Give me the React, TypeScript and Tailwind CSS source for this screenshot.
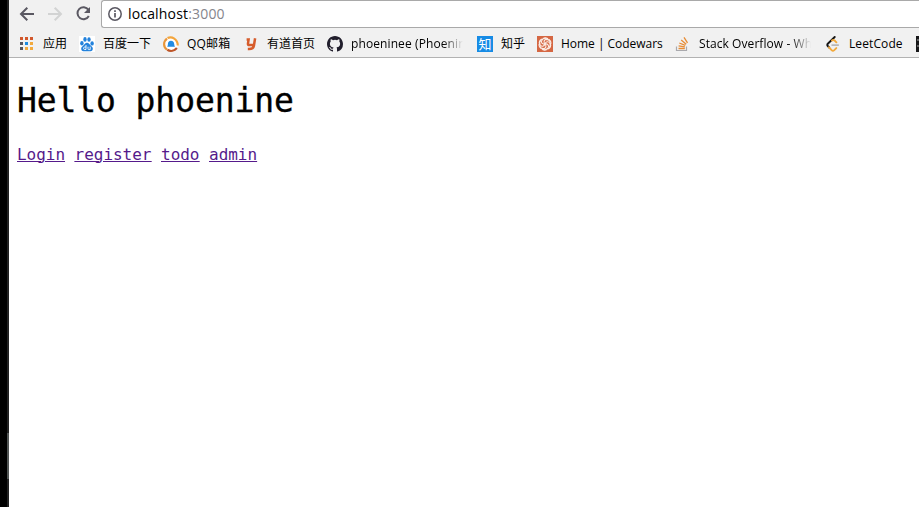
import type { ReactNode } from "react";

function AppsIcon() {
  const colors = ["#d2582c", "#d2582c", "#d2582c", "#55555f", "#1c8be0", "#f2a93c", "#55555f", "#f2a93c", "#f2a93c"];
  return (
    <svg viewBox="0 0 16 16" className="size-4" shapeRendering="crispEdges">
      {colors.map((c, i) => (
        <rect key={i} x={1 + (i % 3) * 5} y={1 + Math.floor(i / 3) * 5} width="3" height="3" fill={c} />
      ))}
    </svg>
  );
}

function BaiduIcon() {
  return (
    <svg viewBox="0 0 16 16" className="size-4 bg-white" fill="#2382dc">
      <ellipse cx="2.9" cy="7.2" rx="1.7" ry="2.2" />
      <ellipse cx="6" cy="3.4" rx="1.7" ry="2.3" />
      <ellipse cx="10" cy="3.5" rx="1.7" ry="2.3" />
      <ellipse cx="13.1" cy="7.4" rx="1.7" ry="2.2" />
      <path d="M8 6.7c1.8 0 2.4 1.6 3.7 2.8 1.5 1.2 2.5 2.2 2 4-.6 2.3-3.3 1.7-5.7 1.7s-5.1.6-5.7-1.7c-.5-1.8.5-2.8 2-4C5.600 8.300 6.200 6.700 8 6.700Z" />
      <path d="M7 9v4.500H5.700c-1.600 0-1.600-2.500 0-2.500H7M9 10.700v2.100c0 .8.5.8 1.200.8h1v-2.900" fill="none" stroke="#fff" strokeWidth="0.9" />
    </svg>
  );
}

function MailIcon() {
  return (
    <svg viewBox="0 0 16 16" className="size-4" fill="none" strokeWidth="2.200">
      <circle cx="8" cy="8" r="7" fill="#fff" />
      <path d="M4.500 2.100C9 .200 14.600 3 14.800 9.500" stroke="#f3a53d" />
      <path d="M4 2.600C.2 5.500.1 11 4 13.700" stroke="#e9963a" />
      <path d="M4.300 13.800c3.200 1.900 7.200 1 9.600-1.700" stroke="#bd5529" />
      <path d="M8 4.700c2 0 3.200 1.500 3.200 3.400 0 1.100.3 1.900.8 2.700H4.200c.5-.8.700-1.600.7-2.700C4.900 6.200 6 4.700 8 4.700Z" fill="#218be3" />
    </svg>
  );
}

function YoudaoIcon() {
  return (
    <svg viewBox="0 0 16 16" className="size-4">
      <path d="M3.600 3.400h2L5 7.400c-.2 1.300.2 1.700 1.200 1.700H10M12.100 2.300l-1.200 7.500c-.5 2.600-2 3.300-4.700 3.300H4.800" fill="none" stroke="#d65c2c" strokeWidth="2.500" />
    </svg>
  );
}

function GithubIcon() {
  return (
    <svg viewBox="0 0 16 16" className="size-4" fill="#211e2c">
      <path d="M8 0C3.580 0 0 3.580 0 8c0 3.540 2.290 6.530 5.470 7.590.4.070.55-.17.55-.38 0-.19-.01-.82-.01-1.490-2.010.37-2.530-.49-2.690-.94-.09-.23-.48-.94-.82-1.130-.28-.15-.68-.52-.01-.53.63-.01 1.080.58 1.230.82.72 1.210 1.870.87 2.330.66.07-.52.28-.87.51-1.070-1.780-.2-3.640-.89-3.640-3.950 0-.87.31-1.590.82-2.150-.08-.2-.36-1.020.08-2.120 0 0 .67-.21 2.200.82a7.500 7.500 0 0 1 4 0c1.530-1.040 2.200-.82 2.200-.82.44 1.100.16 1.920.08 2.120.51.56.82 1.270.82 2.150 0 3.070-1.870 3.750-3.650 3.950.29.25.54.73.54 1.480 0 1.070-.01 1.930-.01 2.200 0 .21.15.46.55.38A8.010 8.010 0 0 0 16 8c0-4.420-3.580-8-8-8Z" />
    </svg>
  );
}

function ZhihuIcon() {
  return (
    <span className="flex size-4 items-center justify-center bg-[#168be5] font-['Noto_Sans_CJK_SC',sans-serif] text-[13px] leading-none font-normal text-white">
      知
    </span>
  );
}

function CodewarsIcon() {
  return (
    <svg viewBox="0 0 16 16" className="size-4">
      <path d="M0 0h16v16H0z" fill="#d56743" />
      <g fill="none" stroke="#fbece5" strokeWidth="1.100">
        {[0, 60, 120, 180, 240, 300].map((a) => (
          <path key={a} d="M8 8C6.200 6 7 3.500 9.500 3.400c2 0 3.500 1.300 3.900 3M6 2.500c2-.9 4.300-.5 5.300 1.100" transform={`rotate(${a} 8 8)`} />
        ))}
      </g>
    </svg>
  );
}

function StackIcon() {
  return (
    <svg viewBox="0 0 16 16" className="size-4" fill="none">
      <path d="M1.500 10.500v4h10v-4" stroke="#a9a9ad" strokeWidth="1.200" />
      <path d="M3.500 12.500h6.300M3.600 9.900l6.300.9M4.300 7l6 2.400M6.200 4l5 4.300M9 1.400l3.500 5.500" stroke="#e78c35" strokeWidth="1.300" />
    </svg>
  );
}

function LeetIcon() {
  return (
    <svg viewBox="0 0 16 16" className="size-4" fill="none" strokeLinecap="round" strokeWidth="1.900">
      <path d="M9.700 1 2.800 7.800c-.7.700-.7 1.500 0 2.200l1.400 1.500" stroke="#151515" />
      <path d="m4 11.300 2.600 2.800c.8.700 1.900.7 2.700 0l2-2M7 4.400c.9-.7 1.800-.6 2.600.1l1.800 1.800" stroke="#f2a93c" />
      <path d="M7.200 9.100h6" stroke="#b8b8b8" />
    </svg>
  );
}

function Bookmark({ icon, children, label }: { icon: ReactNode; children: ReactNode; label: string }) {
  return (
    <div className="flex shrink-0 items-center gap-2">
      <span className="shrink-0">{icon}</span>
      <span className={`h-5 overflow-hidden leading-5 whitespace-nowrap ${label}`}>{children}</span>
    </div>
  );
}

const fade = "[mask-image:linear-gradient(to_right,black_82%,transparent_100%)]";

export default function App() {
  return (
    <div className="flex h-[507px] w-[919px] overflow-hidden bg-white text-black">
      <div className="flex w-[9px] shrink-0 bg-black pl-[7px]">
        <div className="flex w-[2px] flex-col bg-[#222222] pt-[433px]">
          <div className="h-[46px] bg-[#505453]" />
        </div>
      </div>
      <div className="min-w-0 flex-1">
        <header className="h-[58px] border-b border-[#b2b2b2] bg-[#f1f1f1]">
          <div className="flex h-7 pl-[10px]">
            <svg viewBox="0 0 82 28" className="h-7 w-[82px] shrink-0" fill="none" strokeWidth="2">
              <path d="M15 14H2.500M8.300 7.700 2 14l6.300 6.300" stroke="#5a5862" />
              <path d="M29 14h12.500M35.700 7.700 42 14l-6.300 6.300" stroke="#d2d3d3" />
              <path d="M69.400 9.700A6 6 0 1 0 69.800 16" stroke="#5a5862" />
              <path d="M71 7v6h-6Z" fill="#5a5862" />
            </svg>
            <div className="flex h-7 flex-1 items-center rounded-l-[3px] border border-r-0 border-[#a9a9a9] bg-white pl-[6px]">
              <svg viewBox="0 0 14 14" className="size-[14px]" fill="none" stroke="#5a5862" strokeWidth="1.500">
                <circle cx="7" cy="7" r="6.200" />
                <path d="M7 6v4.500M7 3.300V5" strokeWidth="1.700" />
              </svg>
              <span className="ml-[6px] font-['Open_Sans',sans-serif] text-[14px] leading-5 tracking-[0.17px]">
                localhost<span className="text-[#85858c]">:3000</span>
              </span>
            </div>
          </div>
          <nav className="flex h-[29px] items-center overflow-hidden pt-[2px] pl-[10px] font-['Open_Sans','Noto_Sans_CJK_SC',sans-serif] text-[12px]">
            <div className="flex shrink-0 gap-3">
              <Bookmark icon={<AppsIcon />} label="w-6">应用</Bookmark>
              <Bookmark icon={<BaiduIcon />} label="w-12">百度一下</Bookmark>
              <Bookmark icon={<MailIcon />} label="w-11 tracking-[0.2px]">QQ邮箱</Bookmark>
              <Bookmark icon={<YoudaoIcon />} label="w-12">有道首页</Bookmark>
              <Bookmark icon={<GithubIcon />} label={`mr-[2px] w-28 tracking-[0.1px] ${fade}`}>phoeninee (Phoenine)</Bookmark>
              <Bookmark icon={<ZhihuIcon />} label="w-6">知乎</Bookmark>
              <Bookmark icon={<CodewarsIcon />} label="w-[102px] tracking-[-0.03px]">Home | Codewars</Bookmark>
              <Bookmark icon={<StackIcon />} label={`mr-[2px] w-28 tracking-[0.07px] ${fade}`}>Stack Overflow - Where</Bookmark>
              <Bookmark icon={<LeetIcon />} label="mr-px w-[54px] tracking-[0.1px]">LeetCode</Bookmark>
            </div>
            <svg viewBox="0 0 16 16" className="ml-3 size-4 shrink-0">
              <path d="M0 0h16v16H0z" fill="#171719" />
              <path d="M1 4h8M1 10h8" stroke="#aaa" />
            </svg>
          </nav>
        </header>
        <main className="pl-2 font-['DejaVu_Sans_Mono',monospace]">
          <h1 className="pt-[23px] text-[33px] leading-10 tracking-[-0.1px] [-webkit-text-stroke:0.35px_black]">Hello phoenine</h1>
          <div className="mt-6 flex gap-[9.6px] text-[16px] leading-5 tracking-[-0.03px] text-[#551a8b] underline decoration-1 underline-offset-1">
            <a href="#login">Login</a>
            <a href="#register">register</a>
            <a href="#todo">todo</a>
            <a href="#admin">admin</a>
          </div>
        </main>
      </div>
    </div>
  );
}
